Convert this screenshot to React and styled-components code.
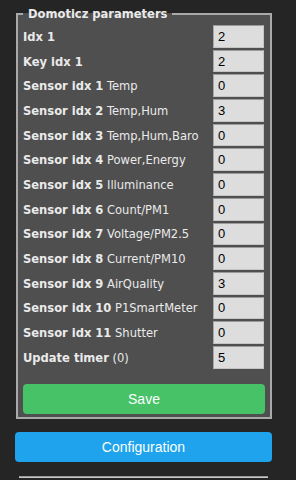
import { Fragment } from "react";
import styled, { createGlobalStyle } from "styled-components";

const GlobalStyle = createGlobalStyle`
  html, body {
    margin: 0;
    background: #252525;
  }
  body {
    font-family: "DejaVu Sans Condensed", "DejaVu Sans", Verdana, sans-serif;
    color: #eaeaea;
  }
`;

const Page = styled.div`
  width: 257px;
  padding: 7px 0 0 15px;
`;

const Fieldset = styled.fieldset`
  margin: 0 0 0 1px;
  padding: 4px 5px 3px 5px;
  border: 2px solid #a9a9a9;
  background: #4f4f4f;
  min-inline-size: auto;
`;

const Legend = styled.legend`
  padding: 0 5px;
  font-weight: bold;
  font-size: 12.8px;
  line-height: 14px;
`;

const Rows = styled.div`
  display: grid;
  grid-template-columns: 1fr 51px;
  row-gap: 2px;
  align-items: center;
  padding-right: 1px;
`;

const Label = styled.label`
  font-size: 12.8px;
  white-space: nowrap;
`;

const Name = styled.b`
  font-weight: bold;
`;

const Input = styled.input`
  box-sizing: border-box;
  width: 51px;
  height: 22.7px;
  margin: 0;
  padding: 0 4px;
  border: 1px solid #c4c4c4;
  border-top-color: #9a9a9a;
  border-left-color: #a8a8a8;
  background: #dddddd;
  color: #000;
  font-family: "Liberation Sans", Arial, sans-serif;
  font-size: 13px;
`;

const Button = styled.button`
  display: block;
  width: 100%;
  height: ${(p) => p.$h}px;
  border: 0;
  border-radius: 4px;
  background: ${(p) => p.$bg};
  color: #faffff;
  font-family: "Liberation Sans", Arial, sans-serif;
  font-size: 14px;
  cursor: pointer;
`;

const SaveWrap = styled.div`
  margin-top: 15px;
`;

const ConfigWrap = styled.div`
  margin-top: 13px;
`;

const Rule = styled.hr`
  margin: 14px 4px 0 4px;
  border: 0;
  border-top: 1px solid #9a9a9a;
  border-bottom: 1px solid #c8c8c8;
`;

const params = [
  ["Idx 1", "", "2"],
  ["Key idx 1", "", "2"],
  ["Sensor idx 1", "Temp", "0"],
  ["Sensor idx 2", "Temp,Hum", "3"],
  ["Sensor idx 3", "Temp,Hum,Baro", "0"],
  ["Sensor idx 4", "Power,Energy", "0"],
  ["Sensor idx 5", "Illuminance", "0"],
  ["Sensor idx 6", "Count/PM1", "0"],
  ["Sensor idx 7", "Voltage/PM2.5", "0"],
  ["Sensor idx 8", "Current/PM10", "0"],
  ["Sensor idx 9", "AirQuality", "3"],
  ["Sensor idx 10", "P1SmartMeter", "0"],
  ["Sensor idx 11", "Shutter", "0"],
  ["Update timer", "(0)", "5"],
];

export default function App() {
  return (
    <Page>
      <GlobalStyle />
      <Fieldset>
        <Legend>Domoticz parameters</Legend>
        <Rows>
          {params.map(([name, extra, value], i) => (
            <Fragment key={i}>
              <Label htmlFor={"p" + i}>
                <Name>{name}</Name>
                {extra && " " + extra}
              </Label>
              <Input id={"p" + i} defaultValue={value} />
            </Fragment>
          ))}
        </Rows>
        <SaveWrap>
          <Button $bg="#47c266" $h={30}>Save</Button>
        </SaveWrap>
      </Fieldset>
      <ConfigWrap>
        <Button $bg="#1fa3ec" $h={30}>Configuration</Button>
      </ConfigWrap>
      <Rule />
    </Page>
  );
}
